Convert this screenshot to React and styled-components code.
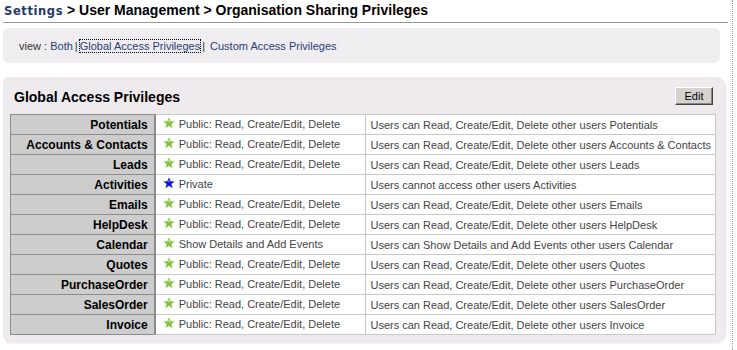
import React from 'react';
import styled, { createGlobalStyle } from 'styled-components';

const GlobalStyle = createGlobalStyle`
  body {
    margin: 0;
    background: #ffffff;
    font-family: "Liberation Sans", Arial, sans-serif;
  }
`;

const rows = [
  ['Potentials', 'green', 'Public: Read, Create/Edit, Delete', 'Users can Read, Create/Edit, Delete other users Potentials'],
  ['Accounts & Contacts', 'green', 'Public: Read, Create/Edit, Delete', 'Users can Read, Create/Edit, Delete other users Accounts & Contacts'],
  ['Leads', 'green', 'Public: Read, Create/Edit, Delete', 'Users can Read, Create/Edit, Delete other users Leads'],
  ['Activities', 'blue', 'Private', 'Users cannot access other users Activities'],
  ['Emails', 'green', 'Public: Read, Create/Edit, Delete', 'Users can Read, Create/Edit, Delete other users Emails'],
  ['HelpDesk', 'green', 'Public: Read, Create/Edit, Delete', 'Users can Read, Create/Edit, Delete other users HelpDesk'],
  ['Calendar', 'green', 'Show Details and Add Events', 'Users can Show Details and Add Events other users Calendar'],
  ['Quotes', 'green', 'Public: Read, Create/Edit, Delete', 'Users can Read, Create/Edit, Delete other users Quotes'],
  ['PurchaseOrder', 'green', 'Public: Read, Create/Edit, Delete', 'Users can Read, Create/Edit, Delete other users PurchaseOrder'],
  ['SalesOrder', 'green', 'Public: Read, Create/Edit, Delete', 'Users can Read, Create/Edit, Delete other users SalesOrder'],
  ['Invoice', 'green', 'Public: Read, Create/Edit, Delete', 'Users can Read, Create/Edit, Delete other users Invoice'],
];

const Star = ({ kind }) => {
  const fill = kind === 'blue' ? '#1414d8' : '#86c440';
  const hi = kind === 'blue' ? '#7070ff' : '#c2e68a';
  return (
    <svg width="12" height="12" viewBox="0 0 12 12">
      <polygon
        points="6,0.3 7.6,4.2 11.7,4.4 8.4,7 9.6,11.2 6,8.7 2.4,11.2 3.6,7 0.3,4.4 4.4,4.2"
        fill={fill}
      />
      <polygon points="6,2 7.1,4.9 4.9,4.9" fill={hi} />
    </svg>
  );
};

const App = () => {
  return (
    <Page>
      <GlobalStyle />
      <Heading>
        <Crumb>Settings</Crumb> &gt; User Management &gt; Organisation Sharing Privileges
      </Heading>
      <ViewBar>
        <Muted>view :</Muted>&nbsp;<Link>Both</Link>
        <Sep>|</Sep>
        <Link $focused>Global Access Privileges</Link>
        <Sep>|</Sep>&nbsp;
        <Link>Custom Access Privileges</Link>
      </ViewBar>
      <Panel>
        <PanelHead>
          <PanelTitle>Global Access Privileges</PanelTitle>
          <EditButton>Edit</EditButton>
        </PanelHead>
        <Table>
          <tbody>
            {rows.map(([name, kind, access, desc]) => (
              <tr key={name}>
                <Label>{name}</Label>
                <Cell>
                  <Access>
                    <Star kind={kind} />
                    {access}
                  </Access>
                </Cell>
                <Cell>{desc}</Cell>
              </tr>
            ))}
          </tbody>
        </Table>
      </Panel>
    </Page>
  );
};

const Page = styled.div`
  width: 733px;
  height: 350px;
  border-right: 1px dotted #9a9a9a;
  box-sizing: border-box;
  padding: 0 6px 0 3px;
`;

const Heading = styled.div`
  height: 22px;
  line-height: 21px;
  padding-left: 1px;
  font-size: 14px;
  font-weight: bold;
  color: #000;
  border-bottom: 1px solid #999;
  margin-right: -2px;
  white-space: nowrap;
`;

const Crumb = styled.span`
  font-family: "DejaVu Sans", Verdana, sans-serif;
  font-size: 11.5px;
  letter-spacing: 0.6px;
  color: #25386a;
`;

const ViewBar = styled.div`
  margin-top: 5px;
  height: 35px;
  display: flex;
  align-items: center;
  padding-left: 16px;
  background: #efedef;
  border-radius: 6px;
  margin-right: 6px;
  font-size: 11px;
`;

const Muted = styled.span`
  color: #333;
`;

const Link = styled.span`
  color: #2a3d78;
  outline: ${p => (p.$focused ? '1px dotted #000' : 'none')};
`;

const Sep = styled.span`
  color: #333;
  margin: 0 2px;
`;

const Panel = styled.div`
  margin-top: 14px;
  background: #eeeaee;
  border-radius: 6px 10px 10px 8px;
  padding: 9px 10px 8px 7px;
  box-shadow: 1px 1px 0 #f4f2f4;
`;

const PanelHead = styled.div`
  display: flex;
  align-items: center;
  justify-content: space-between;
  height: 20px;
  padding-left: 4px;
  margin-bottom: 8px;
`;

const PanelTitle = styled.div`
  font-size: 14px;
  font-weight: bold;
  color: #000;
  padding-top: 2px;
`;

const EditButton = styled.button`
  width: 38px;
  height: 18px;
  margin-right: 3px;
  padding: 0;
  background: #d6d3ce;
  font-family: "Liberation Sans", Arial, sans-serif;
  font-size: 11px;
  color: #000;
  border: 1px solid;
  border-color: #fff #404040 #404040 #fff;
  box-shadow: inset -1px -1px 0 #888;
`;

const Table = styled.table`
  width: 100%;
  border-collapse: collapse;
  background: #fff;
  font-size: 11px;
`;

const Label = styled.td`
  width: 139px;
  height: 19px;
  padding: 0 6px 0 0;
  text-align: right;
  font-size: 12px;
  font-weight: bold;
  color: #000;
  background: #cdcdcd;
  border: 1px solid #8c8c8c;
  border-right: 2px solid #8c8c8c;
  white-space: nowrap;
`;

const Cell = styled.td`
  height: 19px;
  padding: 0 4px;
  color: #444;
  border: 1px solid #c8c8c8;
  white-space: nowrap;
  &:nth-child(2) {
    width: 202px;
    padding-left: 7px;
  }
`;

const Access = styled.span`
  display: inline-flex;
  align-items: center;
  gap: 4px;
  svg {
    margin-top: -2px;
  }
`;

export default App;
